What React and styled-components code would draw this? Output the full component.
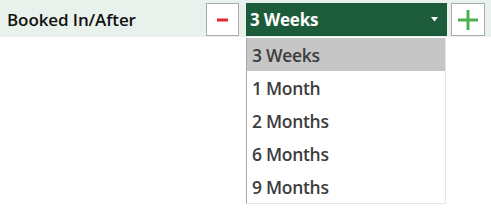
import React from "react";
import styled, { createGlobalStyle } from "styled-components";

const Global = createGlobalStyle`
  html, body { margin: 0; padding: 0; background: #ffffff; }
  body { font-family: "Open Sans", "Noto Sans", sans-serif; min-height: 100vh; }
  #root { min-height: 100vh; }
`;

const Bar = styled.div`
  display: flex;
  align-items: center;
  height: 37px;
  background: #e9f1ec;
  box-sizing: border-box;
  padding: 3px 6px 1px 0;
`;

const Label = styled.div`
  width: 206px;
  padding-left: 7px;
  box-sizing: border-box;
  font-size: 17px;
  font-weight: 600;
  color: #111;
  letter-spacing: -0.1px;
`;

const IconButton = styled.button`
  width: ${(p) => p.$w}px;
  height: 33px;
  box-sizing: border-box;
  border: 1px solid #acacac;
  background: #fff;
  margin: 0;
  padding: 0;
  display: flex;
  align-items: center;
  justify-content: center;
`;

const SelectWrap = styled.div`
  position: relative;
  margin: 0 4px 0 7px;
`;

const SelectBox = styled.div`
  width: 201px;
  height: 33px;
  box-sizing: border-box;
  background: #1d5c3a;
  color: #fff;
  display: flex;
  align-items: center;
  justify-content: space-between;
  padding: 0 9px 1px 4px;
  font-size: 17px;
  font-weight: 700;
  letter-spacing: -0.2px;
`;

const Menu = styled.ul`
  position: absolute;
  z-index: 5;
  top: 35px;
  left: 0;
  width: 200px;
  margin: 0;
  padding: 0;
  list-style: none;
  background: #fff;
  border-left: 1px solid #a8a8a8;
  border-right: 1px solid #e6e6e6;
  border-bottom: 1px solid #e6e6e6;
  box-sizing: border-box;
`;

const Item = styled.li`
  height: 33px;
  display: flex;
  align-items: center;
  padding: 0 0 0 5px;
  box-sizing: border-box;
  font-size: 17.5px;
  font-weight: 600;
  color: #3d3d3d;
  letter-spacing: -0.3px;
  background: ${(p) => (p.$active ? "#c6c6c6" : "transparent")};
`;

const options = ["3 Weeks", "1 Month", "2 Months", "6 Months", "9 Months"];

export default function App() {
  return (
    <>
      <Global />
      <Bar>
        <Label>Booked In/After</Label>
        <IconButton $w={33} aria-label="remove">
          <svg width="12" height="4" viewBox="0 0 12 4">
            <rect x="0" y="0.5" width="11" height="3" fill="#e0282e" />
          </svg>
        </IconButton>
        <SelectWrap>
          <SelectBox>
            <span>3 Weeks</span>
            <svg width="7" height="5" viewBox="0 0 7 5">
              <path d="M0 0 H7 L3.5 4.5 Z" fill="#fff" />
            </svg>
          </SelectBox>
          <Menu>
            {options.map((o, i) => (
              <Item key={o} $active={i === 0}>
                {o}
              </Item>
            ))}
          </Menu>
        </SelectWrap>
        <IconButton $w={34} aria-label="add">
          <svg width="20" height="20" viewBox="0 0 20 20">
            <rect x="8.5" y="0" width="3" height="20" fill="#4cb050" />
            <rect x="0" y="8.5" width="20" height="3" fill="#4cb050" />
          </svg>
        </IconButton>
      </Bar>
    </>
  );
}
